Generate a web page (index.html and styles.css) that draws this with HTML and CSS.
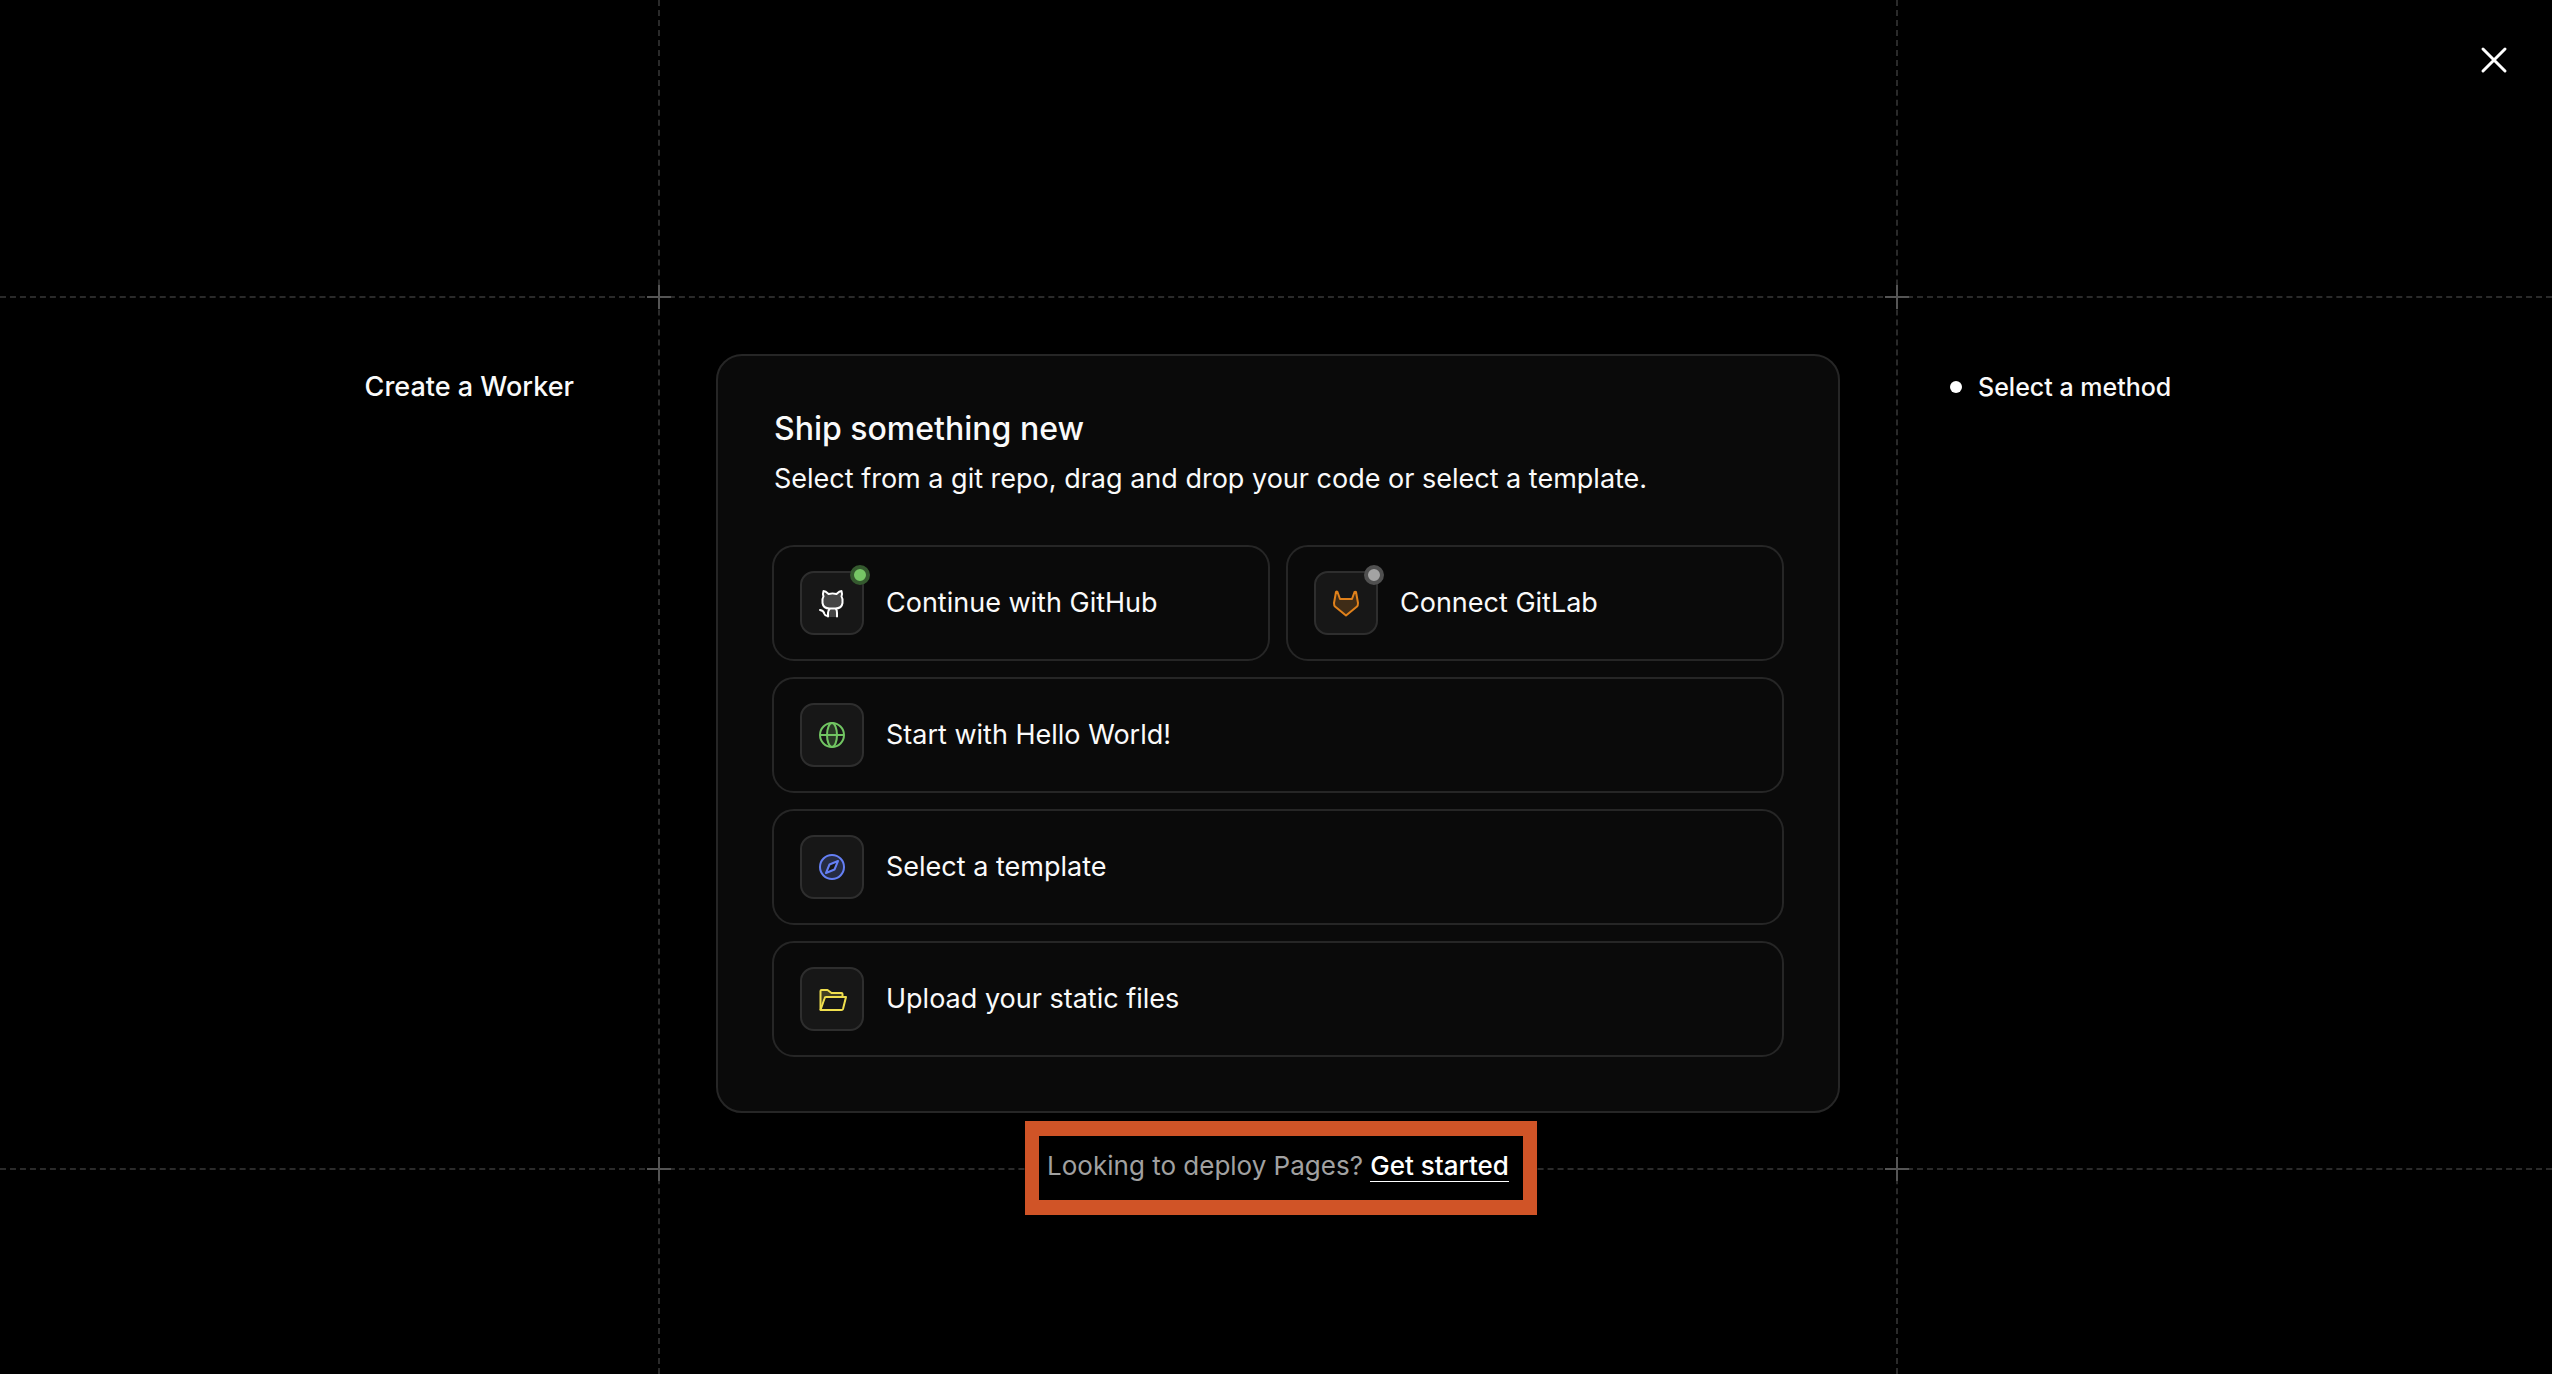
FILE: index.html
```html
<!DOCTYPE html>
<html lang="en">
<head>
<meta charset="utf-8">
<meta name="viewport" content="width=device-width, initial-scale=1">
<title>Create a Worker</title>
<link rel="stylesheet" href="styles.css">
</head>
<body>
<div class="page">
  <div class="guide guide-columns"></div>
  <div class="guide guide-rows"></div>
  <div class="crosses">
    <span class="cross top-left"></span>
    <span class="cross top-right"></span>
    <span class="cross bottom-left"></span>
    <span class="cross bottom-right"></span>
  </div>

  <header class="topbar">
    <button class="close" type="button" aria-label="Close">
      <svg viewBox="0 0 28 28" width="28" height="28" fill="none" stroke="currentColor" stroke-width="3" stroke-linecap="round"><path d="M3 3l22 22M25 3L3 25"/></svg>
    </button>
  </header>

  <h1 class="page-title">Create a Worker</h1>

  <main class="content">
    <section class="card">
      <h2 class="card-title">Ship something new</h2>
      <p class="card-text">Select from a git repo, drag and drop your code or select a template.</p>
      <div class="options">
        <button class="option" type="button">
          <span class="option-icon github">
            <svg viewBox="0 0 32 32" width="32" height="32" fill="none" stroke="currentColor" stroke-width="2" stroke-linecap="round" stroke-linejoin="round">
              <path class="tint" stroke="none" d="M7 5l5 3h8l5-3 1 6v7l-5 4v8h-9v-8l-5-4-1-7z"/>
              <path d="M7.500 4C9.500 4 11 5.500 12.500 7C15 6.300 18 6.300 20.500 7C22 5.500 23.500 4 25.500 4C26.200 6 26.200 8 25.500 9.500C27 11.500 26.800 14 26.500 16C26 19.500 23 21.500 19.500 21.500H13.500C10 21.500 7 19.500 6.500 16C6.200 14 6 11.500 7.500 9.500C6.800 8 6.800 6 7.500 4Z"/>
              <path d="M13.500 22C12.500 23 12 24.500 12 26V29.500M20 22C21 23 21 24.500 21 26V29.500M12 28.500C10 29 9 28.500 8.500 27C8 25 6.500 23.500 4 23"/>
            </svg>
            <span class="status connected"></span>
          </span>
          <span>Continue with GitHub</span>
        </button>
        <button class="option" type="button">
          <span class="option-icon gitlab">
            <svg viewBox="0 0 32 32" width="32" height="32" fill="none" stroke="currentColor" stroke-width="2" stroke-linejoin="round">
              <path class="tint" d="M7.500 5L10 12H22L24.500 5C25 4.500 25.500 4.500 26 5L28 16C28 17.500 28 18.500 27 19.500L16 28.500L5 19.500C4 18.500 4 17.500 4 16L6 5C6.500 4.500 7 4.500 7.500 5Z"/>
            </svg>
            <span class="status"></span>
          </span>
          <span>Connect GitLab</span>
        </button>
        <button class="option wide" type="button">
          <span class="option-icon globe">
            <svg viewBox="0 0 32 32" width="32" height="32" fill="none" stroke="currentColor" stroke-width="2">
              <ellipse class="tint" cx="16" cy="16" rx="5" ry="12"/>
              <circle cx="16" cy="16" r="12"/>
              <path d="M4 16H28"/>
            </svg>
          </span>
          <span>Start with Hello World!</span>
        </button>
        <button class="option wide" type="button">
          <span class="option-icon compass">
            <svg viewBox="0 0 32 32" width="32" height="32" fill="none" stroke="currentColor" stroke-width="2" stroke-linejoin="round">
              <circle class="tint" cx="16" cy="16" r="12"/>
              <path class="needle" d="M22 10L18.500 18.500L10 22L13.500 13.500Z"/>
            </svg>
          </span>
          <span>Select a template</span>
        </button>
        <button class="option wide" type="button">
          <span class="option-icon folder">
            <svg viewBox="0 0 32 32" width="32" height="32" fill="none" stroke="currentColor" stroke-width="2" stroke-linejoin="round">
              <path class="tint" stroke="none" d="M4 7H12L16 10.500H26V14H8L4 26Z"/>
              <path d="M4.500 27V8C4.500 7.300 4.800 7 5.500 7H11.500L15.500 10H25.500C26.200 10 26.500 10.300 26.500 11V14"/>
              <path d="M4.500 27L8.500 15.500C8.700 14.500 9 14 10 14H30L27 26C26.800 26.700 26.500 27 25.500 27Z"/>
            </svg>
          </span>
          <span>Upload your static files</span>
        </button>
      </div>
    </section>
    <p class="pages-note">Looking to deploy Pages? <a href="#pages">Get started</a></p>
  </main>

  <ol class="steps">
    <li class="step">Select a method</li>
  </ol>
</div>
</body>
</html>
```

FILE: styles.css
```css
* {
  box-sizing: border-box;
}

body {
  margin: 0;
  background: #000;
  color: #fafafa;
  font-family: Inter, "Liberation Sans", sans-serif;
}

h1, h2, p, ol {
  margin: 0;
  padding: 0;
}

/* Page frame: three columns, with the card in the middle one */
.page {
  display: grid;
  grid-template-columns: 658fr minmax(0, 1240px) 654fr;
  grid-template-rows: 296px auto 1fr;
  min-height: 100vh;
}

/* Dashed guide lines */
.guide {
  border: 0 dashed #2a2a2a;
}

.guide-columns {
  grid-area: 1 / 2 / 4 / 3;
  border-width: 0 2px;
}

.guide-rows {
  grid-area: 2 / 1 / 3 / 4;
  border-width: 2px 0;
}

.crosses {
  grid-area: 2 / 2;
  position: relative;
}

.cross {
  position: absolute;
  width: 24px;
  height: 24px;
  background:
    linear-gradient(#555, #555) center / 24px 2px no-repeat,
    linear-gradient(#555, #555) center / 2px 24px no-repeat;
}

.top-left, .top-right { top: -11px; }
.bottom-left, .bottom-right { bottom: -11px; }
.top-left, .bottom-left { left: -11px; }
.top-right, .bottom-right { right: -11px; }

.topbar {
  grid-area: 1 / 1 / 2 / 4;
  display: flex;
  justify-content: flex-end;
  align-items: flex-start;
  padding: 36px 34px;
}

.close {
  display: flex;
  padding: 10px;
  border: 0;
  background: none;
  color: #fff;
  cursor: pointer;
}

.page-title {
  grid-area: 2 / 1;
  padding: 70px 84px 0 0;
  font-size: 27px;
  font-weight: 500;
  line-height: 42px;
  text-align: right;
}

.content {
  grid-area: 2 / 2;
  position: relative;
  display: flex;
  flex-direction: column;
  padding: 58px 58px 0;
}

.card {
  padding: 54px;
  border: 2px solid #262626;
  border-radius: 26px;
  background: #0a0a0a;
}

.card-title {
  font-size: 32px;
  font-weight: 500;
  line-height: 38px;
  padding-left: 2px;
}

.card-text {
  font-size: 27px;
  line-height: 42px;
  padding: 10px 0 45px 2px;
}

.options {
  display: grid;
  grid-template-columns: 1fr 1fr;
  gap: 16px;
}

.option {
  display: flex;
  align-items: center;
  gap: 22px;
  padding: 24px 26px;
  border: 2px solid #262626;
  border-radius: 22px;
  background: none;
  color: inherit;
  font: inherit;
  font-size: 27px;
  line-height: 42px;
  text-align: left;
  cursor: pointer;
}

.wide {
  grid-column: 1 / -1;
}

.option-icon {
  position: relative;
  display: flex;
  align-items: center;
  justify-content: center;
  width: 64px;
  height: 64px;
  border: 2px solid #2e2e2e;
  border-radius: 14px;
  background: #171717;
}

.tint {
  fill: currentColor;
  fill-opacity: 0.2;
}

.needle { fill: #171717; }
.github { color: #fff; }
.gitlab { color: #e0811b; }
.globe { color: #71c562; }
.compass { color: #6580f5; }
.folder { color: #f0df4e; }

.status {
  position: absolute;
  top: -8px;
  right: -8px;
  width: 20px;
  height: 20px;
  border: 4px solid #505050;
  border-radius: 50%;
  background: #a3a3a3;
}

.connected {
  border-color: #355a2f;
  background: #76c665;
}

/* Footnote under the card, highlighted with an orange frame */
.pages-note {
  position: relative;
  align-self: center;
  margin: 35px 0 -14px;
  padding: 0 16px;
  background: #000;
  color: #a1a1a1;
  font-size: 26px;
  line-height: 36px;
}

.pages-note::after {
  content: "";
  position: absolute;
  inset: -27px -12px -31px -6px;
  border: solid #d05427;
  border-width: 15px 14px;
  pointer-events: none;
}

.pages-note a {
  color: #fff;
  font-weight: 500;
  text-decoration: none;
  border-bottom: 1px solid currentColor;
}

.steps {
  grid-area: 2 / 3;
  padding: 70px 0 0 52px;
  list-style: none;
}

.step {
  display: flex;
  align-items: center;
  gap: 16px;
  font-size: 25px;
  font-weight: 500;
  line-height: 42px;
}

.step::before {
  content: "";
  width: 12px;
  height: 12px;
  border-radius: 50%;
  background: #fff;
}
```
